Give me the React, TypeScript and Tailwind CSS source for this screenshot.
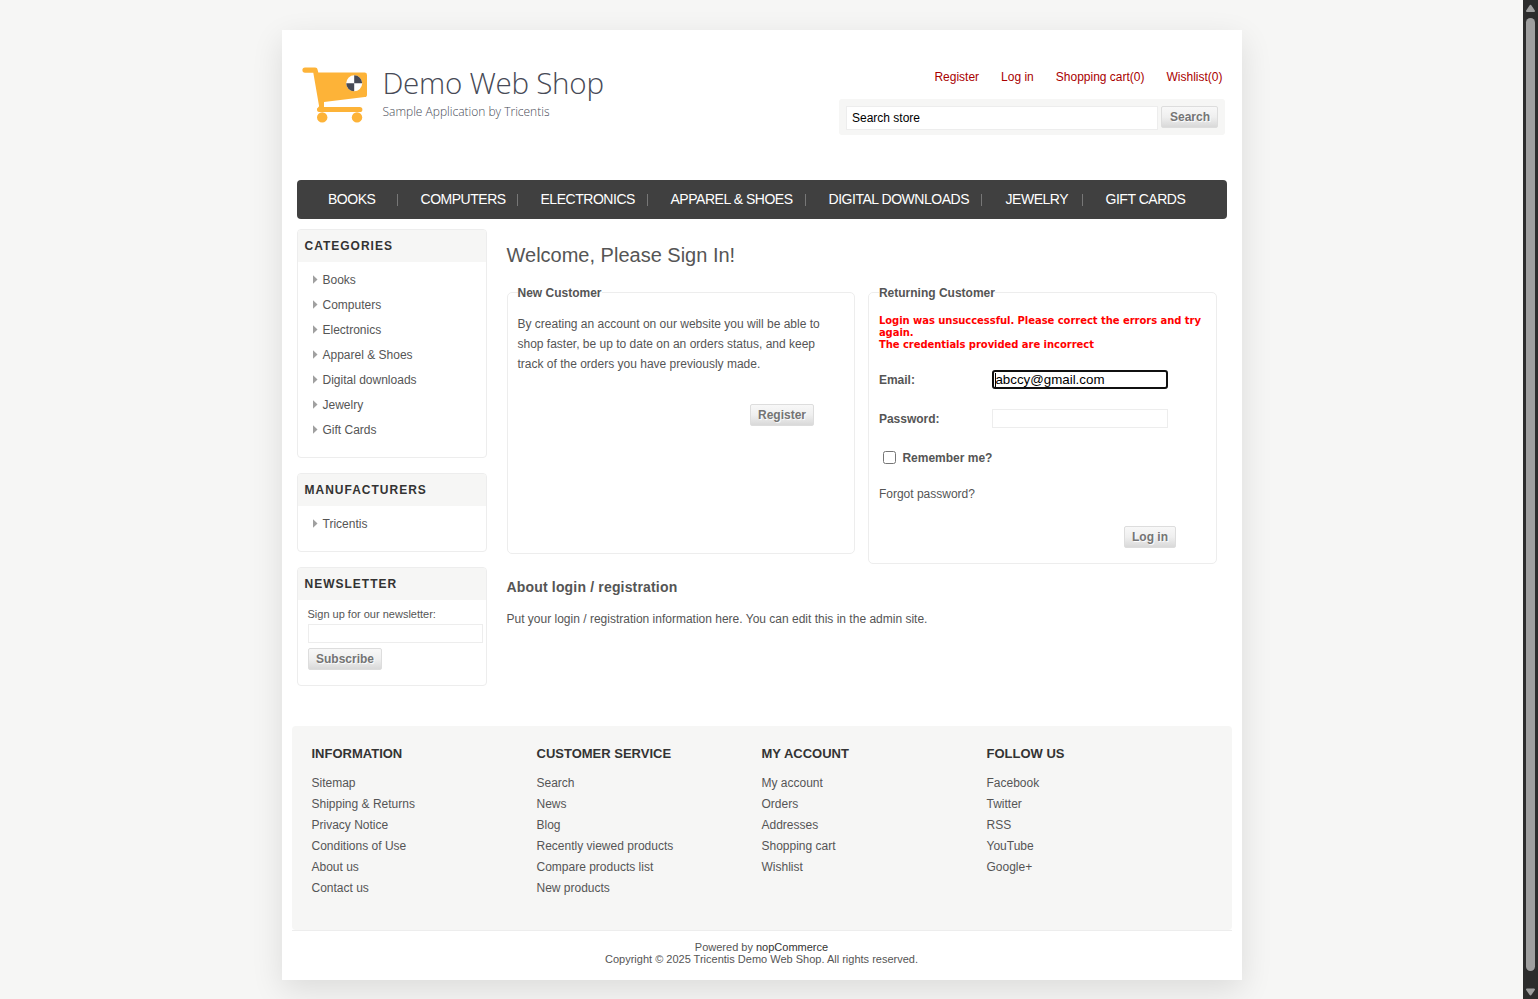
import React from 'react';

const NAV = [
  { label: 'BOOKS', cell: 'w-[101px] pl-[31.5px]' },
  { label: 'COMPUTERS', cell: 'w-[120px] pl-[23px]' },
  { label: 'ELECTRONICS', cell: 'w-[130px] pl-[23px]' },
  { label: 'APPAREL & SHOES', cell: 'w-[158px] pl-[23px]' },
  { label: 'DIGITAL DOWNLOADS', cell: 'w-[176px] pl-[23px]' },
  { label: 'JEWELRY', cell: 'w-[101px] pl-[24px]' },
  { label: 'GIFT CARDS', cell: 'pl-[23px]' },
];

const CATEGORIES = ['Books', 'Computers', 'Electronics', 'Apparel & Shoes', 'Digital downloads', 'Jewelry', 'Gift Cards'];

const FOOTER = [
  { title: 'INFORMATION', links: ['Sitemap', 'Shipping & Returns', 'Privacy Notice', 'Conditions of Use', 'About us', 'Contact us'] },
  { title: 'CUSTOMER SERVICE', links: ['Search', 'News', 'Blog', 'Recently viewed products', 'Compare products list', 'New products'] },
  { title: 'MY ACCOUNT', links: ['My account', 'Orders', 'Addresses', 'Shopping cart', 'Wishlist'] },
  { title: 'FOLLOW US', links: ['Facebook', 'Twitter', 'RSS', 'YouTube', 'Google+'] },
];

function Button({ children, className }: { children: React.ReactNode; className: string }) {
  return (
    <button
      className={`h-[22px] shrink-0 rounded-[2px] border border-[#dddddd] bg-linear-to-b from-[#f8f8f8] via-[#efefef] via-50% to-[#d9d9d9] pl-px text-center text-[12px] leading-[20px] font-bold text-[#747474] [text-shadow:1px_1px_1px_#fff] ${className}`}
    >
      {children}
    </button>
  );
}

function Logo() {
  return (
    <svg width="310" height="64" viewBox="302 62 310 64" aria-label="Demo Web Shop">
      <g fill="#fdb338">
        <path d="M305 67.500h10c1.600 0 2.300.7 2.600 2.200l.7 2.800h46.300a2.400 2.400 0 0 1 2.400 2.400v19.800c0 1.400-.8 2.200-2.200 2.400L324 102v4.900h35.800a2.500 2.500 0 0 1 0 5.200H319.600a2.600 2.600 0 0 1-1.300-4.900l.8-1L313.300 72.700H305a2.600 2.600 0 0 1 0-5.200Z" />
        <circle cx="322.200" cy="117.400" r="5.200" />
        <circle cx="357" cy="117.400" r="5.200" />
      </g>
      <circle cx="354.200" cy="83.300" r="8" fill="#fff" />
      <path d="M354.200 83.300v-8a8 8 0 0 1 8 8ZM354.200 83.300v8a8 8 0 0 1-8-8Z" fill="#474a56" />
      <text x="382.500" y="94" textLength="221.500" fontSize="29.600" fontWeight="300" fontFamily="Open Sans, sans-serif" fill="#474a56">
        Demo Web Shop
      </text>
      <text x="382.500" y="116" textLength="167" fontSize="12" fontWeight="300" fontFamily="Open Sans, sans-serif" fill="#474a56">
        Sample Application by Tricentis
      </text>
    </svg>
  );
}

function Block({ title, className, children }: { title: string; className: string; children: React.ReactNode }) {
  return (
    <section className={`w-[190px] overflow-hidden rounded-[4px] border border-[#ededed] ${className}`}>
      <h3 className="h-[32px] bg-[#f6f6f5] pl-[7px] text-[12px] leading-[33px] font-bold tracking-[1px] text-[#333]">{title}</h3>
      {children}
    </section>
  );
}

function BlockList({ items }: { items: string[] }) {
  return (
    <ul className="pt-[5px]">
      {items.map((t) => (
        <li key={t} className="flex h-[25px] items-center pl-[15px]">
          <svg width="5" height="9" viewBox="0 0 5 9" className="mr-[5px] shrink-0">
            <path d="M0 .3L4.500 4.500L0 8.700Z" fill="#a0a0a0" />
          </svg>
          {t}
        </li>
      ))}
    </ul>
  );
}

export default function App() {
  return (
    <div className="flex h-[999px] w-[1538px] overflow-hidden bg-[#f6f6f5] font-['Liberation_Sans',Arial,sans-serif] text-[12px] text-[#555]">
      <div className="flex flex-1 justify-center pt-[30px]">
        <div className="h-[950px] w-[960px] bg-white px-[15px] shadow-[0_10px_30px_rgba(0,0,0,0.11)]">
          <header className="flex h-[150px] justify-between">
            <div className="pt-[32px] pl-[5.5px]">
              <Logo />
            </div>
            <div className="mr-[1.5px] flex w-[386px] flex-col pt-[37px]">
              <nav className="flex justify-end gap-[22px] pr-[2.5px] leading-[20px] text-[#a90000]">
                <a>Register</a>
                <a>Log in</a>
                <a>Shopping cart(0)</a>
                <a>Wishlist(0)</a>
              </nav>
              <div className="mt-[12px] flex h-[36px] rounded-[3px] bg-[#f6f6f5] pt-[7px] pl-[7px]">
                <div className="h-[24px] w-[312px] border border-[#ededed] bg-white pl-[5px] leading-[22px] text-black">Search store</div>
                <Button className="ml-[3px] w-[57px]">Search</Button>
              </div>
            </div>
          </header>

          <nav className="flex h-[39px] items-center rounded-[4px] bg-[#404040] text-[14px] tracking-[-0.47px] text-white">
            {NAV.map((n, i) => (
              <div
                key={n.label}
                className={`flex h-[12px] items-center whitespace-nowrap ${n.cell} ${i < 6 ? 'border-r border-[#777]' : ''}`}
              >
                {n.label}
              </div>
            ))}
          </nav>

          <div className="flex h-[507px] pt-[10px]">
            <aside className="flex w-[210px] flex-col">
              <Block title="CATEGORIES" className="h-[229px]">
                <BlockList items={CATEGORIES} />
              </Block>
              <Block title="MANUFACTURERS" className="mt-[15px] h-[79px]">
                <BlockList items={['Tricentis']} />
              </Block>
              <Block title="NEWSLETTER" className="mt-[15px] h-[119px]">
                <div className="flex flex-col items-start pt-[7px] pl-[10px] text-[11px]">
                  <span className="leading-[14px]">Sign up for our newsletter:</span>
                  <div className="mt-[3px] h-[19px] w-[175px] border border-[#ededed]" />
                  <Button className="mt-[5px] w-[74px]">Subscribe</Button>
                </div>
              </Block>
            </aside>

            <main className="w-[710px]">
              <h1 className="pt-[11px] text-[20px] leading-[30px]">Welcome, Please Sign In!</h1>
              <div className="mt-[13px] flex items-start justify-between">
                <fieldset className="h-[271px] w-[348px] rounded-[5px] border border-[#ededed] px-[10px]">
                  <legend className="h-[19px] leading-[20px] font-bold">New Customer</legend>
                  <p className="mt-[12px] leading-[20px]">
                    By creating an account on our website you will be able to
                    <br />
                    shop faster, be up to date on an orders status, and keep
                    <br />
                    track of the orders you have previously made.
                  </p>
                  <div className="mt-[30px] flex justify-end pr-[30px]">
                    <Button className="w-[64px]">Register</Button>
                  </div>
                </fieldset>
                <fieldset className="h-[281px] w-[348.6px] rounded-[5px] border border-[#ededed] px-[10px]">
                  <legend className="h-[19px] leading-[20px] font-bold">Returning Customer</legend>
                  <p className="mt-[13px] font-['DejaVu_Sans',Verdana,sans-serif] text-[10px] leading-[12px] font-bold tracking-[-0.05px] whitespace-nowrap text-[#f00]">
                    Login was unsuccessful. Please correct the errors and try
                    <br />
                    again.
                    <br />
                    The credentials provided are incorrect
                  </p>
                  <div className="mt-[19px] flex h-[20px] items-start leading-[20px]">
                    <label className="w-[113px] font-bold">Email:</label>
                    <div className="flex h-[19px] w-[176px] items-center rounded-[3px] border-2 border-[#101010] text-[13.333px] text-black">
                      <span className="ml-px h-[14px] w-px bg-black" />
                      <span className="-ml-[0.5px] leading-[15px]">abccy@gmail.com</span>
                    </div>
                  </div>
                  <div className="mt-[19px] flex h-[20px] items-start leading-[20px]">
                    <label className="w-[113px] font-bold">Password:</label>
                    <div className="h-[19px] w-[176px] border border-[#ededed]" />
                  </div>
                  <div className="mt-[19px] flex h-[20px] items-start leading-[20px]">
                    <input type="checkbox" className="mt-[3px] mr-[6.5px] ml-[4px] size-[13px]" />
                    <label className="font-bold">Remember me?</label>
                  </div>
                  <p className="mt-[16px] leading-[20px]">Forgot password?</p>
                  <div className="mt-[22px] flex justify-end pr-[30px]">
                    <Button className="w-[52px]">Log in</Button>
                  </div>
                </fieldset>
              </div>
              <h2 className="mt-[13px] text-[14px] leading-[20px] font-bold tracking-[0.17px]">About login / registration</h2>
              <p className="mt-[12px] leading-[20px]">Put your login / registration information here. You can edit this in the admin site.</p>
            </main>
          </div>

          <footer className="-mx-[5px]">
            <div className="border-b border-[#ededed]">
              <div className="flex h-[204px] rounded-[4px] bg-[#f6f6f5] pt-[18px] pl-[20px]">
                {FOOTER.map((c) => (
                  <div key={c.title} className="w-[225px]">
                    <h3 className="mb-[9px] text-[13px] leading-[20px] font-bold text-[#333]">{c.title}</h3>
                    {c.links.map((l) => (
                      <a key={l} className="block leading-[21px]">
                        {l}
                      </a>
                    ))}
                  </div>
                ))}
              </div>
            </div>
            <div className="pt-[10px] text-center text-[11px] leading-[12px]">
              <div>
                Powered by <span className="text-[#333]">nopCommerce</span>
              </div>
              <div>Copyright © 2025 Tricentis Demo Web Shop. All rights reserved.</div>
            </div>
          </footer>
        </div>
      </div>

      <div className="flex w-[15px] flex-col items-center bg-[#2c2c2c]">
        <svg width="15" height="18" viewBox="0 0 15 18">
          <path d="M7.5 5.8 11 11H4Z" fill="#9f9f9f" stroke="#9f9f9f" strokeWidth="2" strokeLinejoin="round" />
        </svg>
        <div className="w-[9px] flex-1 rounded-full bg-[#9f9f9f]" />
        <svg width="15" height="28" viewBox="0 0 15 28">
          <path d="M7.5 23.5 11 18.500H4Z" fill="#9f9f9f" stroke="#9f9f9f" strokeWidth="2" strokeLinejoin="round" />
        </svg>
      </div>
    </div>
  );
}
